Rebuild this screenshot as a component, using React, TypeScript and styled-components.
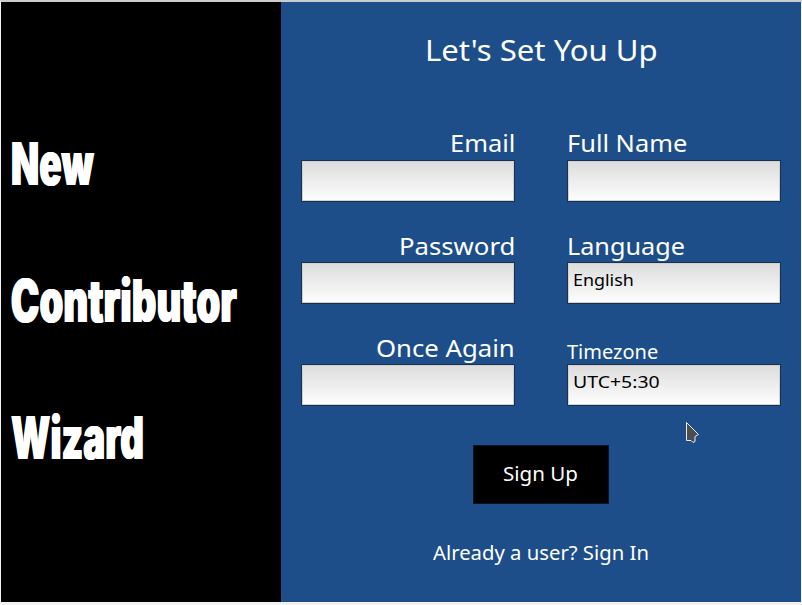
import React, { useLayoutEffect, useRef, useState } from "react";
import styled, { createGlobalStyle } from "styled-components";

const GlobalStyle = createGlobalStyle`
  * { box-sizing: border-box; }
  body { margin: 0; background: #f2f2f2; overflow: hidden; }
`;

const Window = styled.div`
  width: 802px;
  height: 605px;
  display: grid;
  grid-template-columns: 280px 520px;
  grid-template-rows: 600px;
  border-top: 2px solid #c9cbcc;
  border-left: 1px solid #f2f2f2;
  background: #f2f2f2;
  font-family: "Noto Sans", sans-serif;
`;

const Sidebar = styled.aside`
  background: #000;
  color: #fff;
  padding: 91px 0 0 10px;
  display: flex;
  flex-direction: column;
`;

const Banner = styled.div`
  height: 137px;
  font-family: Inter, sans-serif;
  font-weight: 900;
  font-size: 59px;
  line-height: 141px;
  letter-spacing: 0.5px;
  text-shadow: 1px 0 #fff, -1px 0 #fff;
`;

const Panel = styled.main`
  background: #1d4e89;
  color: #fff;
  display: flex;
  flex-direction: column;
  align-items: center;
`;

const Title = styled.h1`
  margin: 0;
  height: 124px;
  font-size: 29.5px;
  font-weight: 400;
  line-height: 96px;
`;

const Form = styled.form`
  width: 480px;
  display: grid;
  grid-template-columns: 214px 214px;
  grid-auto-rows: 102px;
  column-gap: 52px;
`;

const Field = styled.label<{ $end?: boolean }>`
  display: flex;
  flex-direction: column;
  align-items: ${(p) => (p.$end ? "flex-end" : "flex-start")};
`;

const Caption = styled.span<{ $small?: boolean; $first?: boolean }>`
  height: 34px;
  font-size: ${(p) => (p.$small ? 20 : 23.5)}px;
  line-height: ${(p) => (p.$small ? 43 : p.$first ? 35 : 37)}px;
`;

const Control = styled.span`
  width: 214px;
  height: 42px;
  padding: 0 5px;
  border: 1px solid #1c2f4b;
  box-shadow: inset 0 0 0 1px #cfd2d2;
  background: linear-gradient(#dcdcdc, #fefefe);
  color: #000;
  font-size: 17px;
  line-height: 34px;
`;

const SignUp = styled.button`
  width: 136px;
  height: 59px;
  margin: 13px 0 0 0;
  padding: 0 4px 2px 0;
  border: 1px solid #08152a;
  background: #000;
  color: #fff;
  font: 20px/55px "Noto Sans", sans-serif;
`;

const SignIn = styled.div`
  margin-top: 34px;
  font-size: 20px;
  line-height: 30px;
`;

const FitBox = styled.span`
  display: inline-block;
  white-space: nowrap;
`;

const FitInk = styled.span`
  display: inline-block;
  transform-origin: left center;
`;

const Pointer = styled.svg`
  position: absolute;
  left: 685px;
  top: 420px;
`;

function Fit({ width, children }: { width: number; children: string }) {
  const ink = useRef<HTMLSpanElement>(null);
  const [scale, setScale] = useState(1);
  useLayoutEffect(() => {
    if (ink.current) setScale(width / ink.current.offsetWidth);
  }, [width, children]);
  return (
    <FitBox style={{ width }}>
      <FitInk ref={ink} style={{ transform: `scaleX(${scale})` }}>
        {children}
      </FitInk>
    </FitBox>
  );
}

const banners = [
  { text: "New", width: 83 },
  { text: "Contributor", width: 226 },
  { text: "Wizard", width: 133 },
];

const fields = [
  { label: "Email", width: 65, end: true, first: true },
  { label: "Full Name", width: 120, first: true },
  { label: "Password", width: 116, end: true },
  { label: "Language", width: 118, value: "English", valueWidth: 61 },
  { label: "Once Again", width: 139, end: true },
  { label: "Timezone", width: 91, small: true, value: "UTC+5:30", valueWidth: 87 },
];

export default function App() {
  return (
    <>
      <GlobalStyle />
      <Window>
        <Sidebar>
          {banners.map((b) => (
            <Banner key={b.text}>
              <Fit width={b.width}>{b.text}</Fit>
            </Banner>
          ))}
        </Sidebar>
        <Panel>
          <Title>
            <Fit width={233}>Let's Set You Up</Fit>
          </Title>
          <Form>
            {fields.map((f) => (
              <Field key={f.label} $end={f.end}>
                <Caption $small={f.small} $first={f.first}>
                  <Fit width={f.width}>{f.label}</Fit>
                </Caption>
                <Control>
                  {f.value && <Fit width={f.valueWidth!}>{f.value}</Fit>}
                </Control>
              </Field>
            ))}
          </Form>
          <SignUp type="button">
            <Fit width={75}>Sign Up</Fit>
          </SignUp>
          <SignIn>
            <Fit width={216}>Already a user? Sign In</Fit>
          </SignIn>
        </Panel>
      </Window>
      <Pointer width="16" height="25" viewBox="0 0 16 25">
        <path
          d="M1.5 2.5V20.5H6L8 22.5L10 21.5V16.5L13.5 14.5Z"
          fill="#4d4d4d"
          stroke="#e8edf2"
          strokeWidth="1"
        />
      </Pointer>
    </>
  );
}
